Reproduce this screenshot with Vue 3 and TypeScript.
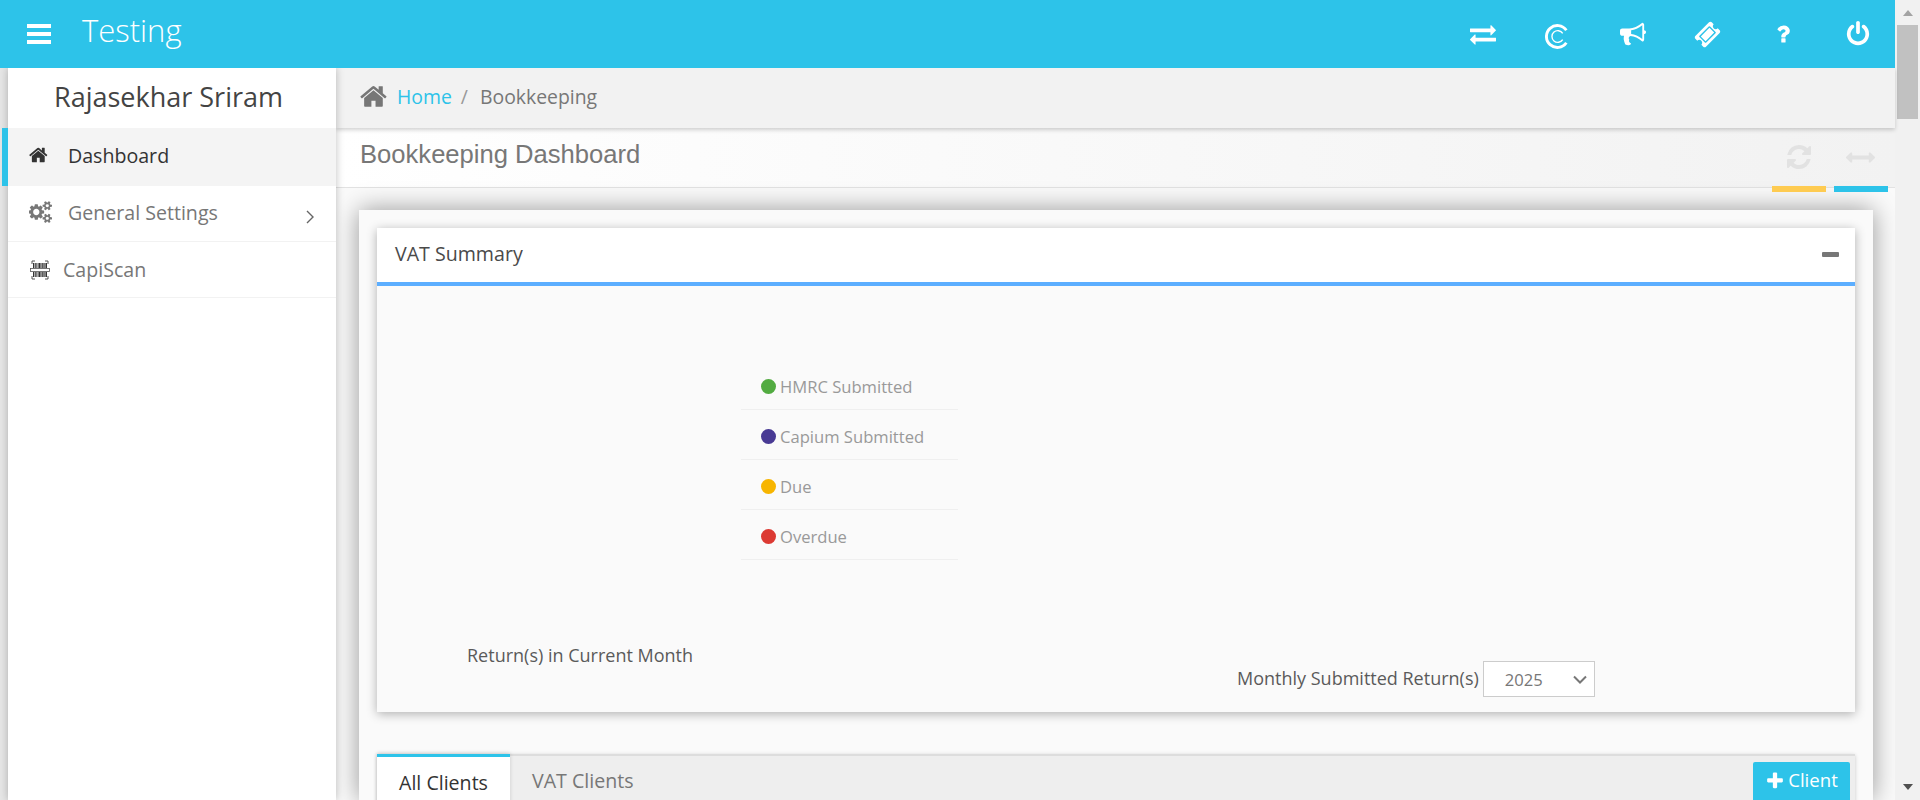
<script setup lang="ts">
const icons = {
  home: 'M1408 992v480q0 26-19 45t-45 19h-384v-384h-256v384h-384q-26 0-45-19t-19-45v-480q0-1 .5-3t.5-3l575-474 575 474q1 2 1 6zm223-69l-62 74q-8 9-21 11h-3q-13 0-21-7l-692-577-692 577q-12 8-24 7-13-2-21-11l-62-74q-8-10-7-23.5t11-21.5l719-599q32-26 76-26t76 26l244 204v-195q0-14 9-23t23-9h192q14 0 23 9t9 23v408l219 182q10 8 11 21.5t-7 23.5z',
  exchange: 'M1792 1184v192q0 13-9.5 22.5t-22.5 9.5h-1376v192q0 13-9.5 22.5t-22.5 9.5q-12 0-24-10l-319-320q-9-9-9-22 0-14 9-23l320-320q9-9 23-9 13 0 22.5 9.5t9.5 22.5v192h1376q13 0 22.5 9.5t9.5 22.5zm0-544q0 14-9 23l-320 320q-9 9-23 9-13 0-22.5-9.5t-9.5-22.5v-192h-1376q-13 0-22.5-9.5t-9.5-22.5v-192q0-13 9.5-22.5t22.5-9.5h1376v-192q0-14 9-23t23-9q12 0 24 10l319 319q9 9 9 23z',
  bullhorn: 'M1664 640q53 0 90.5 37.5t37.5 90.5-37.5 90.5-90.5 37.5v384q0 52-38 90t-90 38q-417-347-812-380-58 19-91 66t-31 100.5 40 92.5q-20 33-23 65.5t6 58 33.5 55 48 50 61.5 50.5q-29 58-111.5 83t-168.5 11.5-132-55.5q-7-23-29.5-87.5t-32-94.5-23-89-15-101 3.5-98.5 22-110.5h-122q-66 0-113-47t-47-113v-192q0-66 47-113t113-47h480q435 0 896-384 52 0 90 38t38 90v384zm-128 604v-954q-394 302-768 343v270q377 42 768 341z',
  ticket: 'M1024 452l316 316-572 572-316-316zm-211 979l618-618q19-19 19-45t-19-45l-362-362q-18-18-45-18t-45 18l-618 618q-19 19-19 45t19 45l362 362q18 18 45 18t45-18zm889-637l-907 908q-37 37-90.5 37t-90.5-37l-126-126q56-56 56-136t-56-136-136-56-136 56l-125-126q-37-37-37-90.5t37-90.5l907-906q37-37 90.5-37t90.5 37l125 125q-56 56-56 136t56 136 136 56 136-56l126 125q37 37 37 90.5t-37 90.5z',
  question: 'M1088 1256v240q0 16-12 28t-28 12h-240q-16 0-28-12t-12-28v-240q0-16 12-28t28-12h240q16 0 28 12t12 28zm316-600q0 54-15.5 101t-35 76.5-55 59.5-57.5 43.5-61 35.5q-41 23-68.5 65t-27.5 67q0 17-12 32.5t-28 15.5h-240q-15 0-25.5-18.5t-10.5-37.5v-45q0-83 65-156.5t143-108.5q59-27 84-56t25-76q0-42-46.5-74t-107.5-32q-65 0-108 29-35 25-107 115-13 16-31 16-12 0-25-8l-164-125q-13-10-15.5-25t5.5-28q160-266 464-266 80 0 161 31t146 83 106 127.5 41 158.5z',
  power: 'M1664 896q0 156-61 298t-164 245-245 164-298 61-298-61-245-164-164-245-61-298q0-182 80.5-343t226.5-270q43-32 95.5-25t83.5 50q32 42 24.5 94.5t-49.5 84.5q-98 74-151.5 181t-53.5 228q0 104 40.5 198.5t109.5 163.5 163.5 109.5 198.5 40.5 198.5-40.5 163.5-109.5 109.5-163.5 40.5-198.5q0-121-53.5-228t-151.5-181q-42-32-49.5-84.5t24.5-94.5q31-43 84-50t95 25q146 109 226.5 270t80.5 343zm-640-768v640q0 52-38 90t-90 38-90-38-38-90v-640q0-52 38-90t90-38 90 38 38 90z',
  refresh: 'M1639 1056q0 5-1 7-64 268-268 434.5t-478 166.5q-146 0-282.5-55t-243.5-157l-129 129q-19 19-45 19t-45-19-19-45v-448q0-26 19-45t45-19h448q26 0 45 19t19 45-19 45l-137 137q71 66 161 102t187 36q134 0 250-65t186-179q11-17 53-117 8-23 30-23h192q13 0 22.5 9.5t9.5 22.5zm25-800v448q0 26-19 45t-45 19h-448q-26 0-45-19t-19-45 19-45l138-138q-148-137-349-137-134 0-250 65t-186 179q-11 17-53 117-8 23-30 23h-199q-13 0-22.5-9.5t-9.5-22.5v-7q65-268 270-434.5t480-166.5q146 0 284 55.5t245 156.5l130-129q19-19 45-19t45 19 19 45z',
  arrowsH: 'M1792 896q0 26-19 45l-256 256q-19 19-45 19t-45-19-19-45v-128h-1024v128q0 26-19 45t-45 19-45-19l-256-256q-19-19-19-45t19-45l256-256q19-19 45-19t45 19 19 45v128h1024v-128q0-26 19-45t45-19 45 19l256 256q19 19 19 45z',
  plus: 'M1600 736v192q0 40-28 68t-68 28h-416v416q0 40-28 68t-68 28h-192q-40 0-68-28t-28-68v-416h-416q-40 0-68-28t-28-68v-192q0-40 28-68t68-28h416v-416q0-40 28-68t68-28h192q40 0 68 28t28 68v416h416q40 0 68 28t28 68z',
  gears: 'M832 896q0-106-75-181t-181-75-181 75-75 181 75 181 181 75 181-75 75-181zm768 512q0-52-38-90t-90-38-90 38-38 90q0 53 37.5 90.5t90.5 37.5 90.5-37.5 37.5-90.5zm0-1024q0-52-38-90t-90-38-90 38-38 90q0 53 37.5 90.5t90.5 37.5 90.5-37.5 37.5-90.5zm-384 421v185q0 10-7 19.5t-16 10.5l-155 24q-11 35-32 76 34 48 90 115 7 11 7 20 0 12-7 19-23 30-82.5 89.5t-78.5 59.5q-11 0-21-7l-115-90q-37 19-77 31-11 108-23 155-7 24-30 24h-186q-11 0-20-7.5t-10-17.5l-23-153q-34-10-75-31l-118 89q-7 7-20 7-11 0-21-8-144-133-144-160 0-9 7-19 10-14 41-53t47-61q-23-44-35-82l-152-24q-10-1-17-9.5t-7-19.5v-185q0-10 7-19.5t16-10.5l155-24q11-35 32-76-34-48-90-115-7-11-7-20 0-12 7-20 22-30 82-89t79-59q11 0 21 7l115 90q34-18 77-32 11-108 23-154 7-24 30-24h186q11 0 20 7.5t10 17.5l23 153q34 10 75 31l118-89q8-7 20-7 11 0 21 8 144 133 144 160 0 8-7 19-12 16-42 54t-45 60q23 48 34 82l152 23q10 2 17 10.5t7 19.5zm640 533v140q0 16-149 31-12 27-30 52 51 113 51 138 0 4-4 7-122 71-124 71-8 0-46-47t-52-68q-20 2-30 2t-30-2q-14 21-52 68t-46 47q-2 0-124-71-4-3-4-7 0-25 51-138-18-25-30-52-149-15-149-31v-140q0-16 149-31 13-29 30-52-51-113-51-138 0-4 4-7 4-2 35-20t59-34 30-16q8 0 46 46.5t52 67.5q20-2 30-2t30 2q51-71 92-112l6-2q4 0 124 70 4 3 4 7 0 25-51 138 17 23 30 52 149 15 149 31zm0-1024v140q0 16-149 31-12 27-30 52 51 113 51 138 0 4-4 7-122 71-124 71-8 0-46-47t-52-68q-20 2-30 2t-30-2q-14 21-52 68t-46 47q-2 0-124-71-4-3-4-7 0-25 51-138-18-25-30-52-149-15-149-31v-140q0-16 149-31 13-29 30-52-51-113-51-138 0-4 4-7 4-2 35-20t59-34 30-16q8 0 46 46.5t52 67.5q20-2 30-2t30 2q51-71 92-112l6-2q4 0 124 70 4 3 4 7 0 25-51 138 17 23 30 52 149 15 149 31z'
}

const legend = [
  { label: 'HMRC Submitted', color: '#52ab41' },
  { label: 'Capium Submitted', color: '#483a94' },
  { label: 'Due', color: '#f7b500' },
  { label: 'Overdue', color: '#dc3a33' }
]

const barcodeBars = [0, 1.6, 2.6, 4.6, 6, 7.4, 8.8, 10.4, 11.6, 13]
</script>

<template>
  <div class="app-root">
    <div class="page">
      <header class="topbar">
        <div class="menu-btn"><span></span><span></span><span></span></div>
        <div class="brand">Testing</div>
        <nav class="top-icons">
          <a class="top-icon"><svg class="i-exchange" viewBox="0 0 1792 1792"><path :d="icons.exchange" /></svg></a>
          <a class="top-icon">
            <svg class="i-capium" viewBox="0 0 24 24">
              <path d="M20.5 6A10.5 10.5 0 1 0 20.5 18" />
              <path class="thin" d="M17 9A5.6 5.6 0 1 0 17 15" />
            </svg>
          </a>
          <a class="top-icon"><svg class="i-horn" viewBox="0 0 1792 1792"><path :d="icons.bullhorn" /></svg></a>
          <a class="top-icon"><svg class="i-ticket" viewBox="0 0 1792 1792"><path :d="icons.ticket" /></svg></a>
          <a class="top-icon"><svg class="i-question" viewBox="0 0 1792 1792"><path :d="icons.question" /></svg></a>
          <a class="top-icon"><svg class="i-power" viewBox="0 0 1792 1792"><path :d="icons.power" /></svg></a>
        </nav>
      </header>

      <div class="below">
        <aside class="sidebar">
          <div class="user-name">Rajasekhar Sriram</div>
          <ul class="side-menu">
            <li class="active">
              <svg class="side-home" viewBox="0 0 1792 1792"><path :d="icons.home" /></svg>
              <span>Dashboard</span>
            </li>
            <li>
              <svg class="side-gears" viewBox="0 0 1920 1792"><path :d="icons.gears" /></svg>
              <span>General Settings</span>
              <svg class="chevron" viewBox="0 0 8 14"><path d="M1 1l6 6-6 6" /></svg>
            </li>
            <li class="scan">
              <svg class="side-scan" viewBox="0 0 20 20">
                <path class="corners" d="M2 4V1H5M15 1H18V4M2 16V19H5M15 19H18V16" />
                <g v-for="b in barcodeBars" :key="b">
                  <rect :x="3 + b" y="3" width="1" height="5" />
                  <rect :x="3 + b" y="12" width="1" height="5" />
                </g>
                <rect class="scan-line" x="0.5" y="8.5" width="19" height="3" />
              </svg>
              <span>CapiScan</span>
            </li>
          </ul>
        </aside>

        <main class="main">
          <div class="breadcrumb">
            <svg class="crumb-home" viewBox="0 0 1792 1792"><path :d="icons.home" /></svg>
            <a class="crumb-link">Home</a>
            <span class="crumb-sep">/</span>
            <span class="crumb-current">Bookkeeping</span>
          </div>

          <div class="title-band">
            <h1>Bookkeeping Dashboard</h1>
            <div class="band-actions">
              <button class="band-btn yellow"><svg class="i-refresh" viewBox="0 0 1792 1792"><path :d="icons.refresh" /></svg></button>
              <button class="band-btn blue"><svg class="i-arrows" viewBox="0 0 1792 1792"><path :d="icons.arrowsH" /></svg></button>
            </div>
          </div>

          <div class="content">
            <section class="outer-card">
              <div class="panel">
                <div class="panel-head">
                  <span>VAT Summary</span>
                  <i class="minus"></i>
                </div>
                <div class="panel-body">
                  <div class="chart-col">
                    <ul class="legend">
                      <li v-for="item in legend" :key="item.label">
                        <i class="dot" :style="{ backgroundColor: item.color }"></i>
                        <span>{{ item.label }}</span>
                      </li>
                    </ul>
                    <p class="chart-caption">Return(s) in Current Month</p>
                  </div>
                  <div class="monthly-col">
                    <span class="monthly-label">Monthly Submitted Return(s)</span>
                    <div class="year-select">
                      <span>2025</span>
                      <svg viewBox="0 0 14 9"><path d="M1 1.5l6 6 6-6" /></svg>
                    </div>
                  </div>
                </div>
              </div>

              <div class="tabs">
                <a class="tab active">All Clients</a>
                <a class="tab">VAT Clients</a>
                <button class="add-btn">
                  <svg viewBox="0 0 1792 1792"><path :d="icons.plus" /></svg>
                  <span>Client</span>
                </button>
              </div>
            </section>
          </div>
        </main>
      </div>
    </div>

    <div class="scrollbar">
      <i class="arrow-up"></i>
      <div class="thumb"></div>
      <i class="arrow-down"></i>
    </div>
  </div>
</template>

<style>
html, body {
  margin: 0;
  background: #f1f1f1;
}
</style>

<style scoped>
* {
  box-sizing: border-box;
}

.app-root {
  display: flex;
  width: 1920px;
  height: 800px;
  overflow: hidden;
  font-family: "Open Sans", "Liberation Sans", sans-serif;
  color: #555;
}

.page {
  flex: 1;
  min-width: 0;
  display: flex;
  flex-direction: column;
}

.topbar {
  flex: none;
  height: 68px;
  display: flex;
  align-items: center;
  background: #2dc3e9;
  color: #fff;
  position: relative;
  z-index: 3;
}

.menu-btn {
  width: 24px;
  margin-left: 27px;
  display: flex;
  flex-direction: column;
  gap: 4px;
}

.menu-btn span {
  height: 4px;
  background: #fff;
}

.brand {
  margin-left: 31px;
  font-size: 31px;
  font-weight: 300;
  line-height: 1;
  position: relative;
  top: -4px;
}

.top-icons {
  margin-left: auto;
  display: flex;
}

.top-icon {
  width: 75px;
  height: 40px;
  display: flex;
  align-items: center;
  justify-content: center;
}

.top-icon svg {
  fill: #fff;
}

.i-exchange { width: 26px; height: 26px; }
.top-icon .i-capium { width: 25px; height: 25px; fill: none; stroke: #fff; stroke-width: 2.8; margin-top: 4px; }
.i-capium .thin { stroke-width: 1.3; }
.i-horn { width: 26px; height: 26px; }
.i-ticket { width: 27px; height: 27px; }
.i-question { width: 24px; height: 24px; }
.i-power { width: 26px; height: 26px; }

.below {
  flex: 1;
  min-height: 0;
  display: flex;
  background: #e6e6e6;
}

.sidebar {
  flex: none;
  width: 328px;
  margin-left: 8px;
  background: #fff;
  box-shadow: 0 0 8px rgba(0, 0, 0, 0.25);
  position: relative;
  z-index: 2;
}

.user-name {
  height: 60px;
  padding: 0 7px 3px 0;
  display: flex;
  align-items: center;
  justify-content: center;
  font-size: 27px;
  color: #444;
}

.side-menu {
  list-style: none;
  margin: 0;
  padding: 0;
}

.side-menu li {
  height: 56px;
  display: flex;
  align-items: center;
  position: relative;
  padding-left: 60px;
  padding-bottom: 2px;
  font-size: 19.6px;
  color: #777;
  border-bottom: 1px solid #f2f2f2;
}

.side-menu li.active {
  height: 58px;
  padding-bottom: 4px;
  background: #f4f4f4;
  color: #333;
  border-bottom: none;
}

.side-menu li.active::before {
  content: "";
  position: absolute;
  left: -6px;
  top: 0;
  bottom: 0;
  width: 6px;
  background: #2dc3e9;
}

.side-menu li.scan {
  padding-left: 55px;
  padding-bottom: 0;
}

.side-home {
  position: absolute;
  left: 21px;
  width: 20px;
  height: 20px;
  fill: #333;
}

.side-gears {
  position: absolute;
  left: 21px;
  top: 15px;
  width: 24px;
  height: 22px;
  fill: #777;
}

.side-scan {
  position: absolute;
  left: 22px;
  width: 20px;
  height: 20px;
  fill: #333;
}

.side-scan .corners {
  fill: none;
  stroke: #444;
  stroke-width: 0.9;
}

.side-scan .scan-line {
  fill: #fff;
  stroke: #555;
  stroke-width: 0.8;
}

.chevron {
  position: absolute;
  right: 22px;
  top: 24px;
  width: 8px;
  height: 14px;
  fill: none;
  stroke: #666;
  stroke-width: 1.4;
}

.main {
  flex: 1;
  min-width: 0;
  display: flex;
  flex-direction: column;
  background: #fafafa;
}

.breadcrumb {
  flex: none;
  height: 60px;
  padding-bottom: 4px;
  display: flex;
  align-items: center;
  padding-left: 24px;
  background: #f2f2f2;
  font-size: 19.4px;
  color: #777;
  box-shadow: 0 2px 4px rgba(0, 0, 0, 0.18);
  position: relative;
  z-index: 1;
}

.crumb-home {
  width: 29px;
  height: 29px;
  fill: #777;
  margin-right: 8px;
  position: relative;
}

.crumb-link {
  color: #2dc3e9;
}

.crumb-sep {
  margin: 0 12px 0 9px;
  color: #999;
}

.title-band {
  flex: none;
  height: 60px;
  display: flex;
  align-items: center;
  justify-content: space-between;
  padding: 0 7px 0 24px;
  background: linear-gradient(to right, #fff, #f2f2f2);
  border-bottom: 1px solid #e2e2e2;
}

.title-band h1 {
  margin: 0 0 6px;
  font-family: "Liberation Sans", Arial, sans-serif;
  font-size: 25.6px;
  font-weight: 400;
  color: #777;
}

.band-actions {
  display: flex;
  gap: 8px;
  align-self: flex-start;
  height: 64px;
  position: relative;
}

.band-btn {
  width: 54px;
  height: 64px;
  padding: 0;
  border: none;
  border-bottom: 6px solid;
  background: transparent;
  display: flex;
  align-items: center;
  justify-content: center;
}

.band-btn svg {
  fill: #e2e2e2;
}

.band-btn.yellow { border-color: #fecb51; }
.band-btn.blue { border-color: #2dc3e9; }
.i-refresh { width: 28px; height: 28px; }
.i-arrows { width: 29px; height: 29px; margin-left: -2px; }

.content {
  flex: 1;
  min-height: 0;
  padding: 22px 22px 0 23px;
}

.outer-card {
  background: #fafafa;
  padding: 18px;
  height: 100%;
  box-shadow: 0 0 24px rgba(0, 0, 0, 0.4);
}

.panel {
  height: 484px;
  display: flex;
  flex-direction: column;
  background: #fafafa;
  box-shadow: 0 2px 10px rgba(0, 0, 0, 0.3);
}

.panel-head {
  flex: none;
  height: 58px;
  padding: 0 16px 4px 18px;
  display: flex;
  align-items: center;
  justify-content: space-between;
  background: #fff;
  border-bottom: 4px solid #5caeff;
  font-size: 19.6px;
  color: #4a4a4a;
}

.minus {
  width: 17px;
  height: 5px;
  margin-top: 2px;
  background: #777;
  border-radius: 1px;
}

.panel-body {
  flex: 1;
  min-height: 0;
  display: grid;
  grid-template-columns: 860px 1fr;
  padding-bottom: 15px;
}

.chart-col {
  padding: 74px 0 0 90px;
}

.legend {
  list-style: none;
  margin: 0 0 0 274px;
  padding: 0;
  width: 217px;
}

.legend li {
  height: 50px;
  display: flex;
  align-items: center;
  gap: 4px;
  padding: 3px 0 0 20px;
  border-bottom: 1px solid #efefef;
  font-size: 16.6px;
  color: #999;
}

.dot {
  width: 15px;
  height: 15px;
  border-radius: 50%;
}

.chart-caption {
  margin: 83px 0 0;
  font-size: 18px;
  line-height: 24px;
  color: #5a5a5a;
}

.monthly-col {
  align-self: end;
  display: flex;
  align-items: center;
  gap: 4px;
}

.monthly-label {
  font-size: 18px;
  color: #5a5a5a;
  position: relative;
  top: -1px;
}

.year-select {
  width: 112px;
  height: 36px;
  display: flex;
  align-items: center;
  justify-content: space-between;
  padding: 0 7px 0 21px;
  background: #fff;
  border: 1px solid #ccc;
  font-size: 16.6px;
  color: #777;
}

.year-select svg {
  width: 14px;
  height: 9px;
  fill: none;
  stroke: #777;
  stroke-width: 2;
}

.tabs {
  margin-top: 42px;
  height: 60px;
  display: flex;
  align-items: flex-start;
  position: relative;
  background: #eee;
  box-shadow: inset 0 2px 0 #ddd, 0 1px 4px rgba(0, 0, 0, 0.2);
}

.tab {
  width: 133px;
  height: 56px;
  display: flex;
  justify-content: center;
  padding-top: 13px;
  font-size: 19.6px;
  color: #777;
}

.tab.active {
  background: #fff;
  color: #333;
  border-top: 3px solid #2dc3e9;
  padding-top: 12px;
  box-shadow: 0 -1px 4px rgba(0, 0, 0, 0.15);
}

.tab + .tab {
  width: auto;
  margin-left: 22px;
}

.add-btn {
  position: absolute;
  right: 5px;
  top: 8px;
  width: 97px;
  height: 42px;
  display: flex;
  justify-content: center;
  align-items: flex-start;
  gap: 3px;
  padding: 5px 0 0;
  border: none;
  border-radius: 2px;
  background: #2dc3e9;
  color: #fff;
  font-family: inherit;
  font-size: 18.6px;
}

.add-btn svg {
  width: 20px;
  height: 20px;
  fill: #fff;
  margin-top: 4px;
}

.scrollbar {
  flex: none;
  width: 25px;
  height: 800px;
  display: flex;
  flex-direction: column;
  align-items: center;
  background: #f1f1f1;
}

.arrow-up {
  margin-top: 10px;
  border: 5px solid transparent;
  border-top: 0;
  border-bottom: 6px solid #a3a3a3;
}

.thumb {
  width: 21px;
  height: 94px;
  margin-top: 9px;
  background: #c1c1c1;
}

.arrow-down {
  margin-top: auto;
  margin-bottom: 10px;
  border: 5px solid transparent;
  border-bottom: 0;
  border-top: 6px solid #505050;
}
</style>
